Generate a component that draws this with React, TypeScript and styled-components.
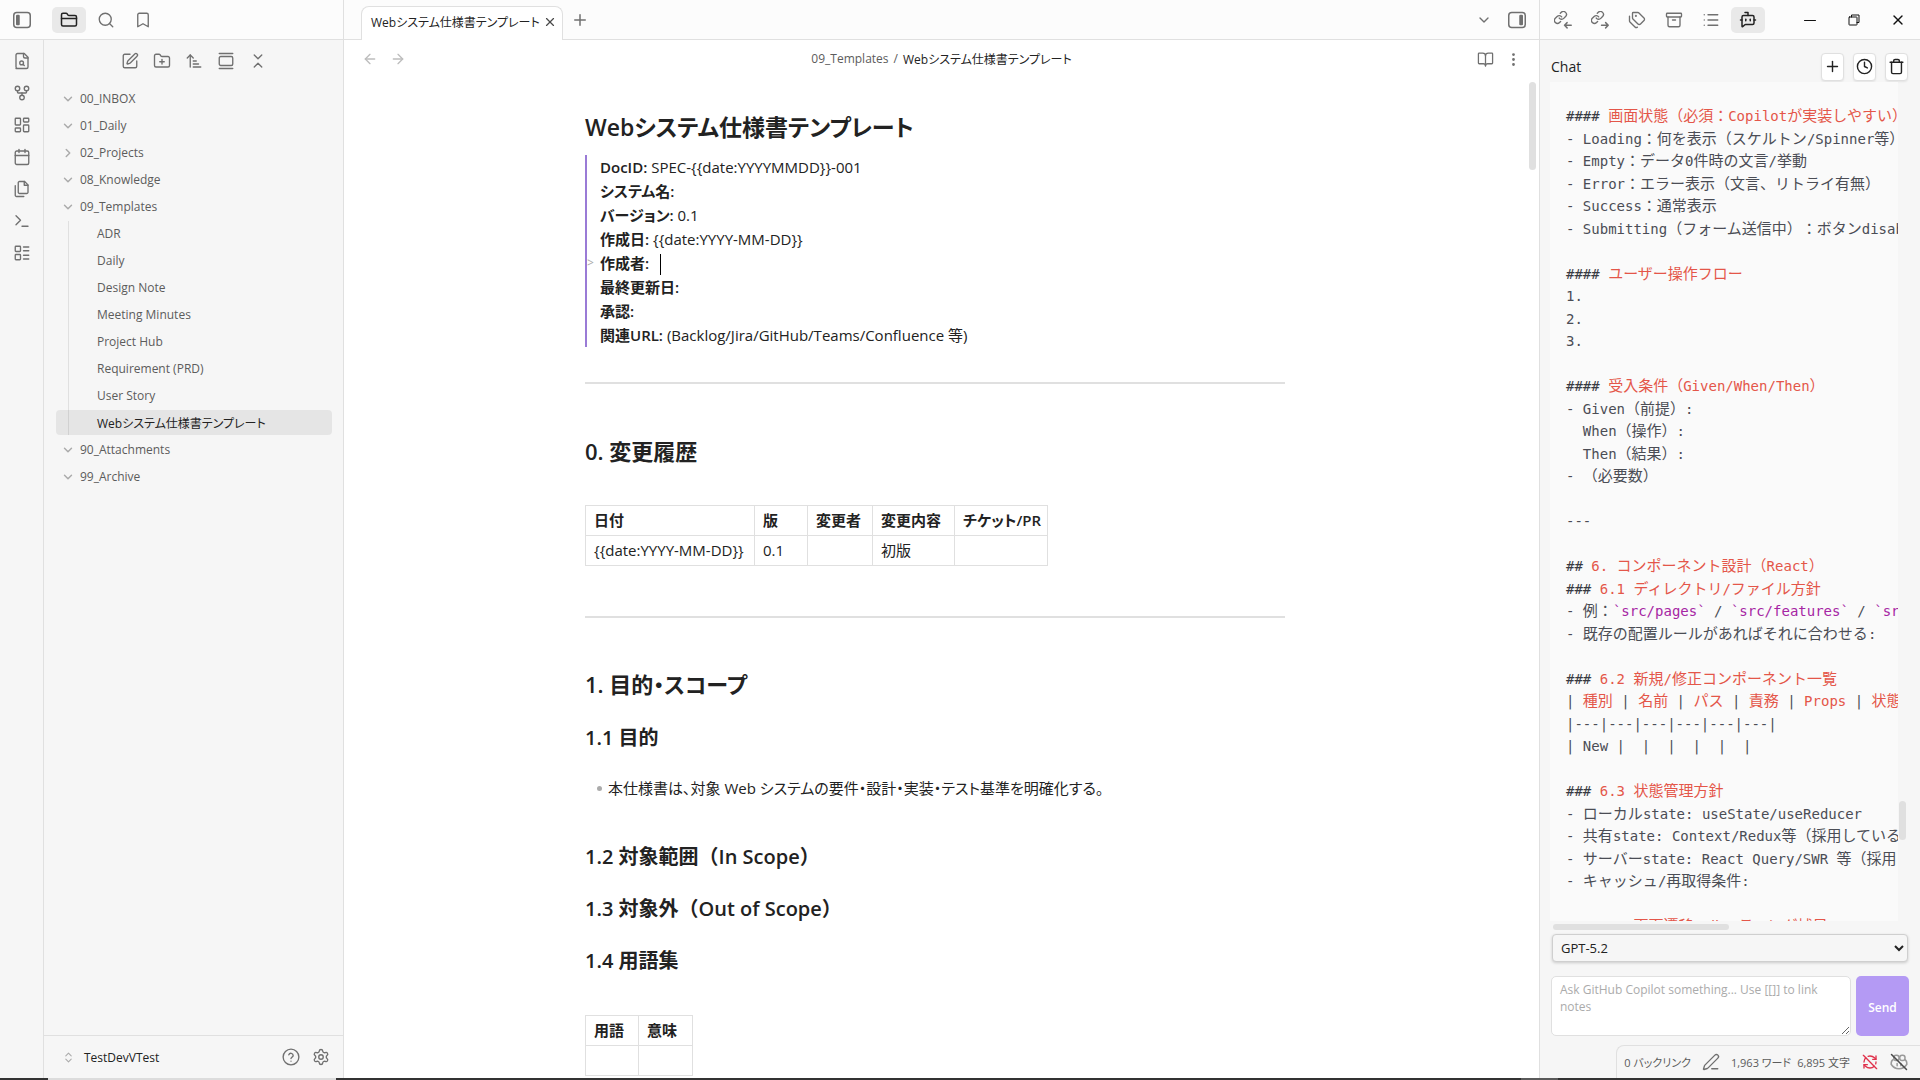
import React, { Fragment, ReactNode } from "react";
import styled, { createGlobalStyle, css } from "styled-components";
import {
  Archive, ArrowLeft, ArrowRight, ArrowUpNarrowWide, Bookmark, BookOpen, BotMessageSquare,
  Calendar, ChevronDown, ChevronRight, ChevronsDownUp, ChevronsUpDown, Clock, EllipsisVertical,
  FolderClosed, FolderPlus, GalleryVertical, GitFork, LayoutDashboard, LayoutList, List,
  PenLine, Plus, RefreshCwOff, Search, Settings, SquarePen, Tags, Terminal, Trash, X,
} from "lucide-react";

const color = {
  text: "#222222",
  muted: "#5c5c5c",
  icon: "#707070",
  faint: "#ababab",
  border: "#e0e0e0",
  bar: "#fcfcfc",
  side: "#f6f6f6",
  active: "#e9e9e9",
  accent: "#9a7bd6",
};

const GlobalStyle = createGlobalStyle`
  * { box-sizing: border-box; }
  body {
    margin: 0;
    font-family: "Open Sans", "Noto Sans CJK JP", sans-serif;
    font-size: 12px;
    color: ${color.text};
    background: #ffffff;
  }
  button, select, textarea { font: inherit; color: inherit; }
`;

const Screen = styled.div`
  height: 100vh;
  display: flex;
  flex-direction: column;
  overflow: hidden;
`;
const Workspace = styled.div`
  flex: 1;
  min-height: 0;
  display: grid;
  grid-template-columns: 344px minmax(0, 1fr) 381px;
`;
const Panel = styled.section`
  display: flex;
  flex-direction: column;
  min-width: 0;
  min-height: 0;
`;
const LeftPanel = styled(Panel)`border-right: 1px solid ${color.border};`;
const RightPanel = styled(Panel)`
  border-left: 1px solid ${color.border};
  background: ${color.side};
`;
const TopBar = styled.header`
  flex: none;
  height: 40px;
  display: flex;
  align-items: center;
  background: ${color.bar};
  border-bottom: 1px solid ${color.border};
`;
const LeftBar = styled(TopBar)`gap: 3px; padding-left: 5px;`;
const RightBar = styled(TopBar)`gap: 3px; padding: 0 2px 0 6px;`;
const Spacer = styled.div`flex: 1;`;

const IconButton = styled.button<{ $w?: number; $h?: number; $tone?: string; $active?: boolean }>`
  flex: none;
  width: ${(p) => p.$w ?? 34}px;
  height: ${(p) => p.$h ?? 26}px;
  padding: 0;
  border: 0;
  border-radius: 5px;
  display: flex;
  align-items: center;
  justify-content: center;
  background: ${(p) => (p.$active ? color.active : "transparent")};
  color: ${(p) => p.$tone ?? (p.$active ? "#222222" : color.icon)};
`;
const PanelToggle = styled(IconButton)`margin-right: 10px;`;

const LeftBody = styled.div`
  flex: 1;
  min-height: 0;
  display: flex;
  background: ${color.side};
`;
const Ribbon = styled.nav`
  width: 44px;
  border-right: 1px solid ${color.border};
  padding-top: 8px;
  display: flex;
  flex-direction: column;
  align-items: center;
  gap: 6px;
`;
const Explorer = styled.div`
  flex: 1;
  display: flex;
  flex-direction: column;
`;
const ExplorerTools = styled.div`
  display: flex;
  justify-content: center;
  padding: 8px 0 12px;
`;
const Tree = styled.ul`
  list-style: none;
  margin: 0;
  padding: 0 11px 0 12px;
  flex: 1;
`;
const SubTree = styled.ul`
  list-style: none;
  margin: 0 0 0 12px;
  padding: 0;
  border-left: 1px solid ${color.border};
`;
const rowStyle = css`
  width: 100%;
  height: 25px;
  margin: 0 0 2px;
  padding: 0;
  border: 0;
  border-radius: 4px;
  display: flex;
  align-items: center;
  background: transparent;
  color: ${color.muted};
  font-feature-settings: "palt";
  white-space: nowrap;
`;
const FolderRow = styled.button`
  ${rowStyle}
  gap: 5px;
  padding-left: 5px;
  svg { color: ${color.faint}; }
`;
const FileRow = styled.button<{ $selected?: boolean }>`
  ${rowStyle}
  padding-left: 28px;
  ${(p) => p.$selected && css`
    width: calc(100% + 13px);
    margin-left: -13px;
    padding-left: 41px;
    background: rgba(0, 0, 0, 0.065);
    color: ${color.text};
  `}
`;
const VaultBar = styled.footer`
  height: 43px;
  border-top: 1px solid ${color.border};
  padding: 0 7px 0 18px;
  display: flex;
  align-items: center;
`;
const VaultName = styled.button`
  border: 0;
  padding: 0;
  background: none;
  display: flex;
  align-items: center;
  gap: 9px;
  svg { color: ${color.faint}; }
`;

const TabBar = styled(TopBar)`
  align-items: flex-end;
  padding-left: 17px;
  padding-right: 5px;
`;
const Tab = styled.div`
  height: 34px;
  margin-bottom: -1px;
  padding: 0 2px 4px 9px;
  display: flex;
  align-items: center;
  border: 1px solid ${color.border};
  border-bottom: 0;
  border-radius: 8px 8px 0 0;
  background: #ffffff;
  font-feature-settings: "palt";
  white-space: nowrap;
`;
const TabTools = styled.div`
  flex: 1;
  height: 39px;
  display: flex;
  align-items: center;
`;
const ViewHeader = styled.div`
  flex: none;
  height: 38px;
  padding: 0 12px;
  display: grid;
  grid-template-columns: 1fr auto 1fr;
  align-items: center;
`;
const Group = styled.div<{ $end?: boolean }>`
  display: flex;
  justify-content: ${(p) => (p.$end ? "flex-end" : "flex-start")};
`;
const Crumbs = styled.div`
  display: flex;
  gap: 5px;
  color: ${color.muted};
  font-feature-settings: "palt";
  a { color: inherit; text-decoration: none; }
  strong { color: ${color.text}; font-weight: 400; }
`;
const EditorScroll = styled.div`
  flex: 1;
  min-height: 0;
  display: grid;
  grid-template-columns: minmax(0, 1fr) 13px;
  overflow: hidden;
`;
const ScrollThumb = styled.div<{ $vertical?: boolean }>`
  border-radius: 4px;
  background: ${color.border};
  ${(p) => (p.$vertical ? "width: 7px;" : "height: 6px;")}
`;
const EditorThumb = styled(ScrollThumb)`height: 88px; margin: 4px 0 0 3px;`;
const Note = styled.article`
  width: 100%;
  max-width: 700px;
  margin: 0 auto;
  padding-top: 32px;
  font-size: 15px;
  line-height: 24px;
  font-feature-settings: "palt";
`;
const H1 = styled.h1`
  margin: 0 0 11px;
  font-size: 23px;
  line-height: 34px;
  font-weight: 600;
`;
const H2 = styled.h2`
  margin: 0;
  font-size: 22px;
  line-height: 32px;
  font-weight: 600;
`;
const H3 = styled.h3`
  margin: 0;
  font-size: 20px;
  line-height: 28px;
  font-weight: 600;
  font-feature-settings: normal;
`;
const Quote = styled.blockquote`
  margin: 0;
  padding-left: 13px;
  border-left: 2px solid ${color.accent};
  strong { font-weight: 600; }
`;
const QuoteLine = styled.div`position: relative;`;
const FoldMark = styled.span`
  position: absolute;
  left: -13px;
  color: ${color.faint};
  font-size: 12px;
`;
const Caret = styled.span`
  display: inline-block;
  width: 1px;
  height: 21px;
  margin-left: 7px;
  background: #000000;
  vertical-align: middle;
`;
const Rule = styled.hr`
  margin: 0;
  border: 0;
  height: 2px;
  background: ${color.border};
`;
const Gap = styled.div<{ $h: number }>`height: ${(p) => p.$h}px;`;
const Table = styled.table`
  border-collapse: collapse;
  th, td {
    height: 30px;
    padding: 1px 6px 3px 8px;
    border: 1px solid ${color.border};
    text-align: left;
    font-weight: 400;
    white-space: nowrap;
  }
  th { font-weight: 600; }
`;
const Col = styled.col<{ $w: number }>`width: ${(p) => p.$w}px;`;
const Bullets = styled.ul`
  list-style: none;
  margin: 0;
  padding: 0 0 0 12px;
  li { display: flex; align-items: center; gap: 6px; }
  li::before {
    content: "";
    width: 5px;
    height: 5px;
    border-radius: 50%;
    background: ${color.faint};
  }
`;

const ChatHeader = styled.div`
  flex: none;
  height: 42px;
  padding: 11px 12px 0 11px;
  display: flex;
  align-items: center;
  gap: 9px;
  h2 { margin: 0; flex: 1; font-size: 14px; font-weight: 400; }
`;
const ChatButton = styled.button`
  width: 23px;
  height: 28px;
  padding: 0;
  border: 1px solid ${color.border};
  border-radius: 4px;
  display: flex;
  flex: none;
  align-items: center;
  justify-content: center;
  background: #ffffff;
  box-shadow: 0 1px 2px rgba(0, 0, 0, 0.08);
`;
const Transcript = styled.div`
  flex: 1;
  min-height: 0;
  padding-left: 10px;
  display: grid;
  grid-template-columns: minmax(0, 1fr) 22px;
`;
const ChatThumb = styled(ScrollThumb)`
  height: 39px;
  align-self: end;
  margin: 0 0 81px 1px;
`;
const Code = styled.pre`
  margin: 0;
  padding: 22px 0 0 16px;
  overflow: hidden;
  background: #fafafa;
  font-family: "Noto Sans CJK JP", sans-serif;
  font-size: 15px;
  line-height: 1.5;
  color: #4b4d55;
  text-spacing-trim: space-all;
`;
const Latin = styled.span`
  font-family: "DejaVu Sans Mono", "Liberation Mono", monospace;
  font-size: 14px;
  line-height: 1;
`;
const Tone = styled.span<{ $kind: string }>`
  color: ${(p) => (p.$kind === "h" ? "#e45649" : p.$kind === "c" ? "#a626a4" : "#383a42")};
`;
const Line = styled.div`
  height: 1.5em;
  white-space: pre;
`;
const HorizontalTrack = styled.div`padding: 3px 0 4px 13px;`;
const ChatThumbH = styled(ScrollThumb)`width: 176px;`;
const Form = styled.form`
  flex: none;
  padding: 0 11px 9px 11px;
  display: grid;
  grid-template-columns: minmax(0, 1fr) 53px;
  gap: 14px 5px;
`;
const Model = styled.select`
  grid-column: 1 / -1;
  height: 28px;
  margin: 0 1px;
  padding: 0 4px;
  border: 1px solid #cfcfcf;
  border-radius: 4px;
  background: ${color.side};
  box-shadow: 0 1px 3px rgba(0, 0, 0, 0.18);
  font-size: 13px;
`;
const Prompt = styled.textarea`
  height: 60px;
  padding: 4px 8px;
  border: 1px solid ${color.border};
  border-radius: 5px;
  background: #ffffff;
  line-height: 17px;
  resize: vertical;
  &::placeholder { color: ${color.faint}; }
`;
const Send = styled.button`
  height: 60px;
  padding: 3px 0 0;
  border: 0;
  border-radius: 5px;
  background: #b49af4;
  color: #ffffff;
  font-weight: 600;
`;
const StatusBar = styled.footer`
  align-self: flex-end;
  flex: none;
  height: 33px;
  padding: 0 12px 0 7px;
  display: flex;
  align-items: center;
  border: 1px solid ${color.border};
  border-width: 1px 0 0 1px;
  border-top-left-radius: 8px;
  color: ${color.muted};
  font-size: 11px;
  font-feature-settings: "palt";
  white-space: nowrap;
`;
const Counts = styled.div`display: flex; gap: 6px;`;
const Taskbar = styled.div`
  flex: none;
  height: 2px;
  display: flex;
  justify-content: space-between;
  padding: 0 362px 0 48px;
  background: #333333;
  &::before { content: ""; width: 288px; background: #dcdcdc; }
  &::after { content: ""; width: 37px; background: #5a5a5a; }
`;

type SvgProps = { size?: number; width?: number; children: ReactNode };
const Svg = ({ size = 18, width = 2, children }: SvgProps) => (
  <svg width={size} height={size} viewBox="0 0 24 24" fill="none" stroke="currentColor"
    strokeWidth={width} strokeLinecap="round" strokeLinejoin="round" aria-hidden="true">
    {children}
  </svg>
);
const SidebarIcon = ({ right }: { right?: boolean }) => (
  <Svg>
    <rect x="1" y="2" width="22" height="20" rx="4" />
    <rect x={right ? 15 : 4} y="5" width="5" height="14" rx="1.5" fill="currentColor" stroke="none" />
  </Svg>
);
const QuickSwitchIcon = () => (
  <Svg width={1.8}>
    <path d="M4 22h14a2 2 0 0 0 2-2V7l-5-5H6a2 2 0 0 0-2 2v16a2 2 0 0 0 2 2" />
    <path d="M14 2v4a2 2 0 0 0 2 2h4" />
    <circle cx="11.5" cy="14.5" r="2.5" />
    <path d="M13.3 16.3 15 18" />
  </Svg>
);
const TemplatesIcon = () => (
  <Svg width={1.8}>
    <path d="M15.5 2H8.6c-.4 0-.8.2-1.1.5-.3.3-.5.7-.5 1.1v12.8c0 .4.2.8.5 1.1.3.3.7.5 1.1.5h9.8c.4 0 .8-.2 1.1-.5.3-.3.5-.7.5-1.1V6.5L15.5 2z" />
    <path d="M15 2v5h5" />
    <path d="M3 7.6v12.8c0 .4.2.8.5 1.1.3.3.7.5 1.1.5h9.8" />
  </Svg>
);
const LinkIcon = ({ outgoing }: { outgoing?: boolean }) => (
  <Svg width={1.9}>
    <g transform="translate(-1 -1) scale(0.8)">
      <path strokeWidth="2.3" d="M10 13a5 5 0 0 0 7.54.54l3-3a5 5 0 0 0-7.07-7.07l-1.72 1.71" />
      <path strokeWidth="2.3" d="M14 11a5 5 0 0 0-7.54-.54l-3 3a5 5 0 0 0 7.07 7.07l1.71-1.71" />
    </g>
    {outgoing ? <path d="M14 19h9m-3.500-3.500 3.500 3.500-3.500 3.500" /> : <path d="M23 19h-9m3.500-3.500-3.500 3.500 3.500 3.500" />}
  </Svg>
);
const HelpIcon = () => (
  <Svg width={1.8}>
    <circle cx="12" cy="12" r="10.5" />
    <path d="M9.1 9a3 3 0 0 1 5.8 1c0 2-2.9 2.6-2.9 4" />
    <path d="M12 17.5h.01" />
  </Svg>
);
const CopilotOffIcon = () => (
  <Svg>
    <rect x="5" y="3" width="7" height="7" rx="3" />
    <rect x="13" y="3" width="7" height="7" rx="3" />
    <path d="M4 9c-2 1-2.500 3-2.500 6C4 19 8 21 12 21s8-2 10.500-6c0-3-.5-5-2.500-6" />
    <path d="M9.500 14v3M14.500 14v3" />
    <path d="M2 2 22 22" stroke="#4a4a4a" />
  </Svg>
);
const RestoreIcon = () => (
  <Svg size={12}>
    <rect x="2" y="6" width="16" height="16" rx="1" />
    <path d="M7 6V2h15v15h-4" />
  </Svg>
);
const MinimizeIcon = () => <Svg size={12}><path d="M1 13h22" /></Svg>;

const thin = { size: 18, strokeWidth: 1.8 };

const folders = [
  { name: "00_INBOX" },
  { name: "01_Daily" },
  { name: "02_Projects", closed: true },
  { name: "08_Knowledge" },
  {
    name: "09_Templates",
    files: ["ADR", "Daily", "Design Note", "Meeting Minutes", "Project Hub", "Requirement (PRD)", "User Story", "Webシステム仕様書テンプレート"],
  },
  { name: "90_Attachments" },
  { name: "99_Archive" },
];
const title = "Webシステム仕様書テンプレート";

const meta: [string, string][] = [
  ["DocID:", "SPEC-{{date:YYYYMMDD}}-001"],
  ["システム名:", ""],
  ["バージョン:", "0.1"],
  ["作成日:", "{{date:YYYY-MM-DD}}"],
  ["作成者:", ""],
  ["最終更新日:", ""],
  ["承認:", ""],
  ["関連URL:", "(Backlog/Jira/GitHub/Teams/Confluence 等)"],
];

type Token = string | [string, string];
const transcript: Token[][] = [
  [["p", "#### "], ["h", "画面状態（必須：Copilotが実装しやすい）"]],
  ["- Loading：何を表示（スケルトン/Spinner等）"],
  ["- Empty：データ0件時の文言/挙動"],
  ["- Error：エラー表示（文言、リトライ有無）"],
  ["- Success：通常表示"],
  ["- Submitting（フォーム送信中）：ボタンdisabled"],
  [],
  [["p", "#### "], ["h", "ユーザー操作フロー"]],
  ["1."],
  ["2."],
  ["3."],
  [],
  [["p", "#### "], ["h", "受入条件（Given/When/Then）"]],
  ["- Given（前提）:"],
  ["  When（操作）:"],
  ["  Then（結果）:"],
  ["- （必要数）"],
  [],
  ["---"],
  [],
  [["p", "## "], ["h", "6. コンポーネント設計（React）"]],
  [["p", "### "], ["h", "6.1 ディレクトリ/ファイル方針"]],
  ["- 例：", ["c", "`src/pages`"], " / ", ["c", "`src/features`"], " / ", ["c", "`src/components`"]],
  ["- 既存の配置ルールがあればそれに合わせる:"],
  [],
  [["p", "### "], ["h", "6.2 新規/修正コンポーネント一覧"]],
  ["| ", ["h", "種別"], " | ", ["h", "名前"], " | ", ["h", "パス"], " | ", ["h", "責務"], " | ", ["h", "Props"], " | ", ["h", "状態"], " |"],
  ["|---|---|---|---|---|---|"],
  ["| New |  |  |  |  |  |"],
  [],
  [["p", "### "], ["h", "6.3 状態管理方針"]],
  ["- ローカルstate: useState/useReducer"],
  ["- 共有state: Context/Redux等（採用している場合）"],
  ["- サーバーstate: React Query/SWR 等（採用している場合）"],
  ["- キャッシュ/再取得条件:"],
  [],
  [["p", "### "], ["h", "6.4 画面遷移・ルーティング補足"]],
];

const Mixed = ({ text }: { text: string }) => (
  <>
    {text.split(/([\x20-\x7e]+)/).map((run, i) =>
      i % 2 ? <Latin key={i}>{run}</Latin> : <Fragment key={i}>{run}</Fragment>,
    )}
  </>
);

const LeftSide = () => (
  <LeftPanel>
    <LeftBar>
      <PanelToggle aria-label="Toggle left sidebar"><SidebarIcon /></PanelToggle>
      <IconButton $active aria-label="Files"><FolderClosed size={18} /></IconButton>
      <IconButton aria-label="Search"><Search {...thin} /></IconButton>
      <IconButton aria-label="Bookmarks"><Bookmark {...thin} /></IconButton>
    </LeftBar>
    <LeftBody>
      <Ribbon>
        <IconButton aria-label="Quick switcher"><QuickSwitchIcon /></IconButton>
        <IconButton aria-label="Graph view"><GitFork {...thin} /></IconButton>
        <IconButton aria-label="Canvas"><LayoutDashboard {...thin} /></IconButton>
        <IconButton aria-label="Daily note"><Calendar {...thin} /></IconButton>
        <IconButton aria-label="Templates"><TemplatesIcon /></IconButton>
        <IconButton aria-label="Command palette"><Terminal {...thin} /></IconButton>
        <IconButton aria-label="Bases"><LayoutList {...thin} /></IconButton>
      </Ribbon>
      <Explorer>
        <ExplorerTools>
          <IconButton $w={32} aria-label="New note"><SquarePen {...thin} /></IconButton>
          <IconButton $w={32} aria-label="New folder"><FolderPlus {...thin} /></IconButton>
          <IconButton $w={32} aria-label="Sort order"><ArrowUpNarrowWide {...thin} /></IconButton>
          <IconButton $w={32} aria-label="Auto reveal"><GalleryVertical {...thin} /></IconButton>
          <IconButton $w={32} aria-label="Collapse all"><ChevronsDownUp {...thin} /></IconButton>
        </ExplorerTools>
        <Tree>
          {folders.map((f) => (
            <li key={f.name}>
              <FolderRow>
                {f.closed ? <ChevronRight size={14} strokeWidth={2.5} /> : <ChevronDown size={14} strokeWidth={2.5} />}
                {f.name}
              </FolderRow>
              {f.files && (
                <SubTree>
                  {f.files.map((n) => (
                    <li key={n}><FileRow $selected={n === title}>{n}</FileRow></li>
                  ))}
                </SubTree>
              )}
            </li>
          ))}
        </Tree>
        <VaultBar>
          <VaultName><ChevronsUpDown size={13} />TestDevVTest</VaultName>
          <Spacer />
          <IconButton $w={30} aria-label="Help"><HelpIcon /></IconButton>
          <IconButton $w={30} aria-label="Settings"><Settings {...thin} /></IconButton>
        </VaultBar>
      </Explorer>
    </LeftBody>
  </LeftPanel>
);

const Center = () => (
  <Panel>
    <TabBar>
      <Tab>
        {title}
        <IconButton $w={20} aria-label="Close tab" $tone="#4a4a4a"><X size={14} /></IconButton>
      </Tab>
      <TabTools>
        <IconButton aria-label="New tab"><Plus size={18} /></IconButton>
        <Spacer />
        <IconButton $w={32} aria-label="Tab list"><ChevronDown size={16} /></IconButton>
        <IconButton aria-label="Toggle right sidebar"><SidebarIcon right /></IconButton>
      </TabTools>
    </TabBar>
    <ViewHeader>
      <Group>
        <IconButton $w={28} $tone="#bdbdbd" aria-label="Back"><ArrowLeft size={16} /></IconButton>
        <IconButton $w={28} $tone="#bdbdbd" aria-label="Forward"><ArrowRight size={16} /></IconButton>
      </Group>
      <Crumbs><a href="#templates">09_Templates</a><span>/</span><strong>{title}</strong></Crumbs>
      <Group $end>
        <IconButton $w={28} aria-label="Reading view"><BookOpen size={17} strokeWidth={1.8} /></IconButton>
        <IconButton $w={28} aria-label="More options"><EllipsisVertical size={17} /></IconButton>
      </Group>
    </ViewHeader>
    <EditorScroll>
      <Note>
        <H1>{title}</H1>
        <Quote>
          {meta.map(([k, v]) => (
            <QuoteLine key={k}>
              {k === "作成者:" && <FoldMark>&gt;</FoldMark>}
              <strong>{k}</strong> {v}
              {k === "作成者:" && <Caret />}
            </QuoteLine>
          ))}
        </Quote>
        <Gap $h={35} />
        <Rule />
        <Gap $h={51} />
        <H2>0. 変更履歴</H2>
        <Gap $h={38} />
        <Table>
          <colgroup><Col $w={169} /><Col $w={53} /><Col $w={65} /><Col $w={82} /><Col $w={90} /></colgroup>
          <thead><tr><th>日付</th><th>版</th><th>変更者</th><th>変更内容</th><th>チケット/PR</th></tr></thead>
          <tbody><tr><td>{"{{date:YYYY-MM-DD}}"}</td><td>0.1</td><td /><td>初版</td><td /></tr></tbody>
        </Table>
        <Gap $h={50} />
        <Rule />
        <Gap $h={50} />
        <H2>1. 目的・スコープ</H2>
        <Gap $h={24} />
        <H3>1.1 目的</H3>
        <Gap $h={24} />
        <Bullets><li>本仕様書は、対象 Web システムの要件・設計・実装・テスト基準を明確化する。</li></Bullets>
        <Gap $h={43} />
        <H3>1.2 対象範囲（In Scope）</H3>
        <Gap $h={24} />
        <H3>1.3 対象外（Out of Scope）</H3>
        <Gap $h={24} />
        <H3>1.4 用語集</H3>
        <Gap $h={40} />
        <Table>
          <colgroup><Col $w={53} /><Col $w={54} /></colgroup>
          <thead><tr><th>用語</th><th>意味</th></tr></thead>
          <tbody><tr><td /><td /></tr></tbody>
        </Table>
      </Note>
      <EditorThumb $vertical />
    </EditorScroll>
  </Panel>
);

const RightSide = () => (
  <RightPanel>
    <RightBar>
      <IconButton aria-label="Backlinks"><LinkIcon /></IconButton>
      <IconButton aria-label="Outgoing links"><LinkIcon outgoing /></IconButton>
      <IconButton aria-label="Tags"><Tags {...thin} /></IconButton>
      <IconButton aria-label="Archive"><Archive {...thin} /></IconButton>
      <IconButton aria-label="Outline"><List {...thin} /></IconButton>
      <IconButton $active aria-label="Copilot chat"><BotMessageSquare size={18} /></IconButton>
      <Spacer />
      <IconButton $w={41} $tone="#111111" aria-label="Minimize"><MinimizeIcon /></IconButton>
      <IconButton $w={41} $tone="#111111" aria-label="Restore"><RestoreIcon /></IconButton>
      <IconButton $w={41} $tone="#111111" aria-label="Close"><X size={16} /></IconButton>
    </RightBar>
    <ChatHeader>
      <h2>Chat</h2>
      <ChatButton aria-label="New chat"><Plus size={17} /></ChatButton>
      <ChatButton aria-label="History"><Clock size={17} /></ChatButton>
      <ChatButton aria-label="Delete"><Trash size={17} /></ChatButton>
    </ChatHeader>
    <Transcript>
      <Code>
        {transcript.map((line, i) => (
          <Line key={i}>
            {line.map((t, j) =>
              typeof t === "string"
                ? <Mixed key={j} text={t} />
                : <Tone key={j} $kind={t[0]}><Mixed text={t[1]} /></Tone>,
            )}
          </Line>
        ))}
      </Code>
      <ChatThumb $vertical />
    </Transcript>
    <HorizontalTrack><ChatThumbH /></HorizontalTrack>
    <Form>
      <Model aria-label="Model"><option>GPT-5.2</option></Model>
      <Prompt aria-label="Message" placeholder="Ask GitHub Copilot something... Use [[]] to link notes" />
      <Send type="button">Send</Send>
    </Form>
    <StatusBar>
      <span>0 バックリンク</span>
      <IconButton $w={40} aria-label="Editing mode"><PenLine {...thin} /></IconButton>
      <Counts><span>1,963 ワード</span><span>6,895 文字</span></Counts>
      <IconButton $w={40} $tone="#e0314b" aria-label="Sync off"><RefreshCwOff size={16} /></IconButton>
      <IconButton $w={18} $tone="#9a9a9a" aria-label="Copilot off"><CopilotOffIcon /></IconButton>
    </StatusBar>
  </RightPanel>
);

export default function App() {
  return (
    <>
      <GlobalStyle />
      <Screen>
        <Workspace>
          <LeftSide />
          <Center />
          <RightSide />
        </Workspace>
        <Taskbar />
      </Screen>
    </>
  );
}
